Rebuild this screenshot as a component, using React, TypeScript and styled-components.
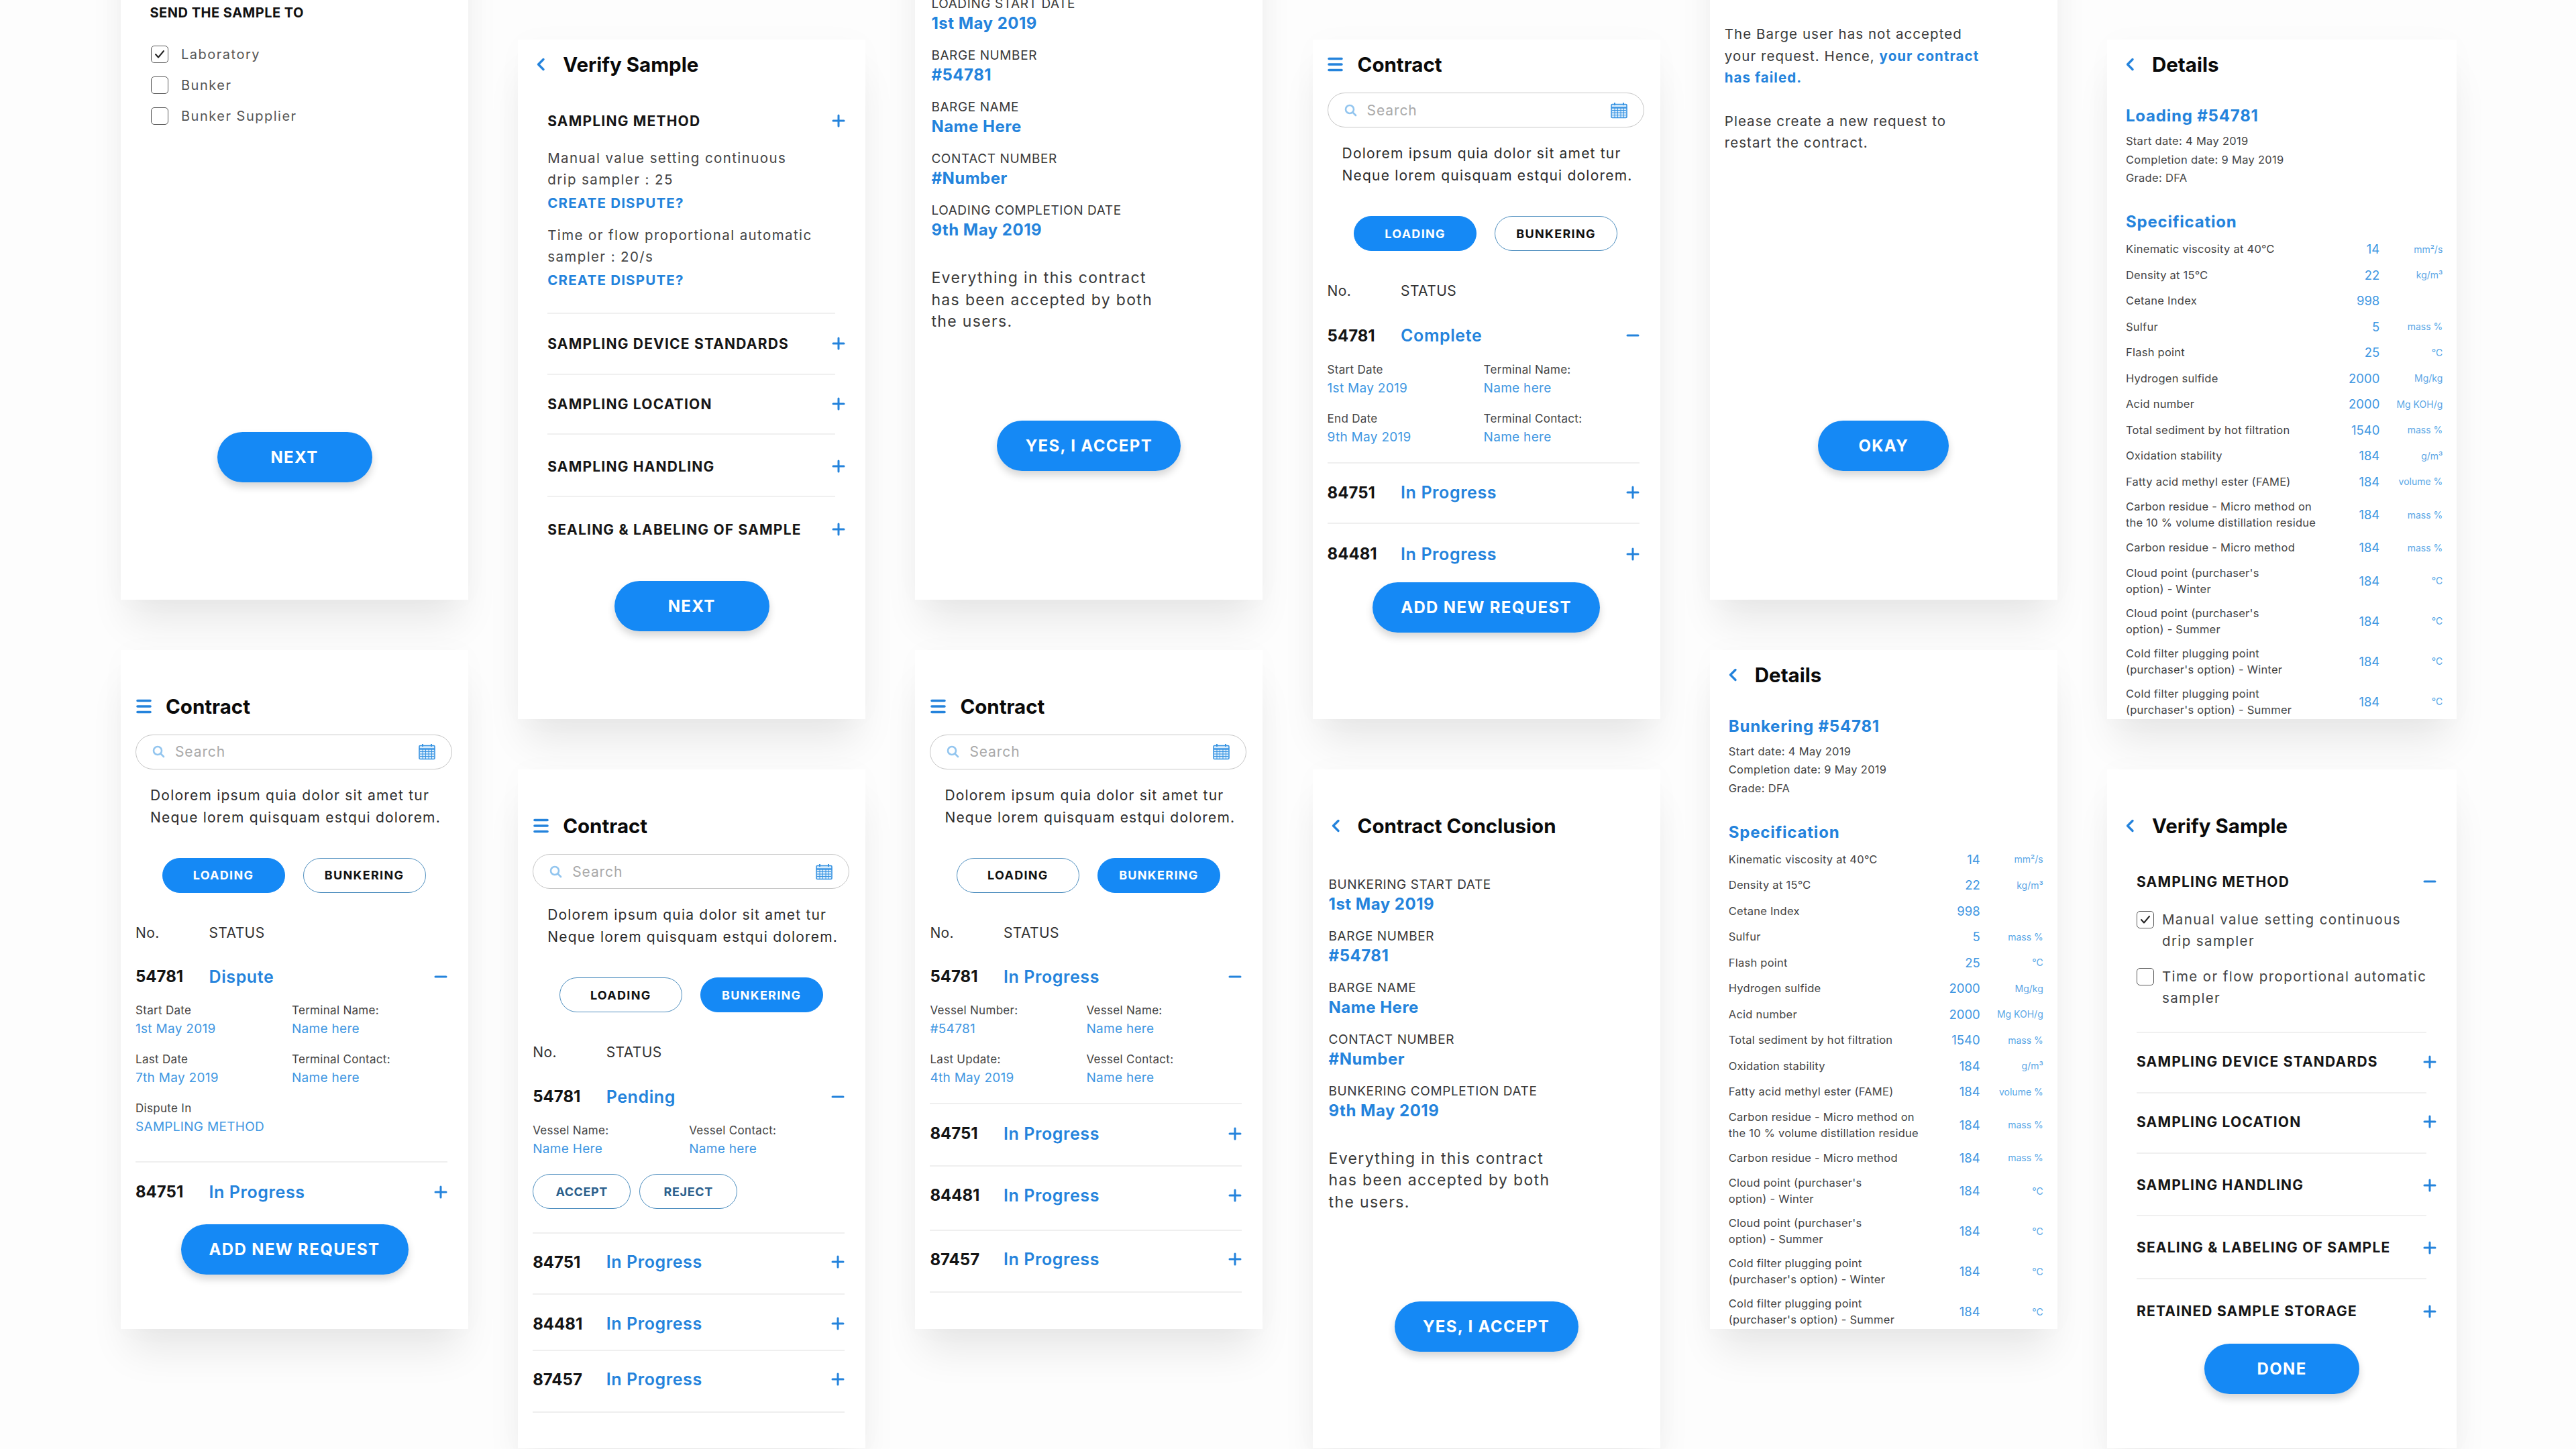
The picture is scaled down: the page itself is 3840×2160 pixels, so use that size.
import React from 'react'
import styled, { createGlobalStyle } from 'styled-components'

const BLUE = '#1589f5'
const LINK = '#2483dc'

const GlobalStyle = createGlobalStyle`
  html, body {
    margin: 0;
    background: #fdfdfd;
    font-family: Inter, "Liberation Sans", sans-serif;
  }
  #root {
    width: 3840px;
    height: 2160px;
    overflow: hidden;
  }
`

const Page = styled.div`
  display: flex;
  gap: 74.2px;
  padding-left: 180px;
  height: 2160px;
  overflow: hidden;
`

const Column = styled.div<{ $top: number }>`
  flex: 0 0 518px;
  display: flex;
  flex-direction: column;
  gap: 75px;
  margin-top: ${({ $top }) => $top}px;
`

const Card = styled.section`
  flex: 0 0 1012.5px;
  height: 1012.5px;
  display: flex;
  flex-direction: column;
  background: #fff;
  overflow: hidden;
  box-shadow: 0 44px 56px -12px rgba(0, 0, 0, 0.085), 0 0 44px rgba(0, 0, 0, 0.018);
`

const Header = styled.header<{ $top: number }>`
  flex: none;
  display: flex;
  align-items: center;
  gap: 21px;
  height: 40px;
  padding: ${({ $top }) => $top}px 0 0 22px;
`

const IconSlot = styled.span`
  width: 24px;
  display: flex;
  justify-content: center;
`

const Title = styled.h1`
  margin: 0;
  font-size: 29.5px;
  font-weight: 700;
  color: #0a0a0a;
`

const SearchBox = styled.div`
  display: flex;
  align-items: center;
  height: 52px;
  margin: 22px -7px 0 0;
  padding: 0 24px;
  border: 1.5px solid #c6c6c6;
  border-radius: 26px;
  box-sizing: border-box;
`

const SearchText = styled.span`
  flex: 1;
  margin-left: 15px;
  font-size: 21px;
  letter-spacing: 0.9px;
  color: #a9a9a9;
`

const Intro = styled.p`
  margin: 22px 0 0 22px;
  font-size: 21px;
  line-height: 33px;
  letter-spacing: 1.2px;
  white-space: nowrap;
  color: #2b2b2b;
`

const Tabs = styled.div`
  display: flex;
  justify-content: center;
  gap: 27px;
  margin: 44px -7px 0 0;
`

const Tab = styled.button<{ $active?: boolean }>`
  width: 183px;
  height: 52px;
  padding: 0;
  border-radius: 26px;
  border: 1.5px solid ${({ $active }) => ($active ? BLUE : '#4f8fbf')};
  background: ${({ $active }) => ($active ? BLUE : '#fff')};
  color: ${({ $active }) => ($active ? '#fff' : '#111')};
  font-family: inherit;
  font-size: 18px;
  font-weight: 700;
  letter-spacing: 1.3px;
`

const ColumnHead = styled.div`
  display: flex;
  margin-top: 45px;
  font-size: 21px;
  line-height: 30px;
  letter-spacing: 0.4px;
  color: #333;
`

const NoCell = styled.span`
  flex: 0 0 109.5px;
`

const ContractBody = styled.div`
  padding: 0 31px 0 22px;
`

const RowItem = styled.div<{ $t: number; $b: number; $line?: boolean }>`
  padding: ${({ $t }) => $t}px 0 ${({ $b }) => $b}px;
  border-bottom: ${({ $line }) => ($line ? '2px solid #efefef' : 'none')};
  margin-bottom: ${({ $line }) => ($line ? '-2px' : '0')};
`

const RowHead = styled.div`
  display: flex;
  align-items: center;
  height: 40px;
`

const RowNo = styled.span`
  flex: 0 0 109.5px;
  font-size: 24px;
  font-weight: 700;
  color: #141414;
`

const RowStatus = styled.span`
  flex: 1;
  font-size: 25px;
  font-weight: 600;
  letter-spacing: 0.6px;
  color: ${LINK};
`

const DetailGrid = styled.div`
  display: grid;
  grid-template-columns: 233px 1fr;
  row-gap: 19px;
  margin-top: 17.5px;
`

const DetailItem = styled.div`
  display: flex;
  flex-direction: column;
`

const DetailLabel = styled.span`
  font-size: 17px;
  line-height: 27px;
  letter-spacing: 0.3px;
  color: #444;
`

const DetailValue = styled.span`
  font-size: 19px;
  line-height: 27px;
  letter-spacing: 0.3px;
  color: #3f97e2;
`

const RowActions = styled.div`
  display: flex;
  gap: 13px;
  margin-top: 24px;
`

const OutlineButton = styled.button`
  width: 146px;
  height: 52px;
  padding: 0;
  border-radius: 26px;
  border: 1.5px solid #4f8fbf;
  background: #fff;
  color: #2b5f8c;
  font-family: inherit;
  font-size: 18px;
  font-weight: 700;
  letter-spacing: 0.6px;
`

const MainButton = styled.button<{ $w: number; $mt: number }>`
  align-self: center;
  flex: none;
  width: ${({ $w }) => $w}px;
  height: 75px;
  margin-top: ${({ $mt }) => $mt}px;
  padding: 0;
  border: none;
  border-radius: 38px;
  background: ${BLUE};
  color: #fff;
  font-family: inherit;
  font-size: 24px;
  font-weight: 700;
  letter-spacing: 1.35px;
  box-shadow: 0 7px 12px rgba(0, 0, 0, 0.16);
`

const Accordion = styled.div<{ $mt?: number }>`
  margin: ${({ $mt }) => $mt ?? 0}px 45px 0 44px;
`

const AccSection = styled.div<{ $t: number; $b: number; $line?: boolean }>`
  padding: ${({ $t }) => $t}px 0 ${({ $b }) => $b}px;
  border-bottom: ${({ $line }) => ($line ? '2px solid #f0f0f0' : 'none')};
  margin-bottom: ${({ $line }) => ($line ? '-2px' : '0')};
`

const AccHead = styled.div`
  display: flex;
  align-items: center;
  justify-content: space-between;
  height: 40px;
  margin-right: -15px;
`

const AccTitle = styled.h2`
  margin: 0;
  font-size: 21px;
  font-weight: 700;
  letter-spacing: 1.2px;
  white-space: nowrap;
  color: #161616;
`

const AccText = styled.p<{ $mt: number }>`
  margin: ${({ $mt }) => $mt}px 0 0;
  font-size: 20.5px;
  line-height: 32px;
  letter-spacing: 1.4px;
  white-space: pre;
  color: #444;
`

const DisputeLink = styled.a`
  display: block;
  margin-top: 2px;
  font-size: 20.5px;
  font-weight: 700;
  line-height: 34px;
  letter-spacing: 1.2px;
  color: ${LINK};
`

const SendTitle = styled.h2`
  margin: 124px 0 0 43.5px;
  font-size: 20px;
  line-height: 28px;
  font-weight: 700;
  letter-spacing: 0.5px;
  color: #111;
`

const CheckList = styled.div`
  display: flex;
  flex-direction: column;
  gap: 20px;
  margin: 35px 0 0 45px;
`

const CheckRow = styled.label`
  display: flex;
  align-items: center;
  gap: 19px;
  font-size: 20px;
  letter-spacing: 1.5px;
  color: #555;
`

const CheckBox = styled.span<{ $top?: number }>`
  flex: none;
  display: flex;
  align-items: center;
  justify-content: center;
  width: 26px;
  height: 26px;
  margin-top: ${({ $top }) => $top ?? 0}px;
  border: 1.5px solid #555;
  border-radius: 5px;
  box-sizing: border-box;
`

const SampleOption = styled.div<{ $mt: number }>`
  display: flex;
  gap: 12px;
  margin-top: ${({ $mt }) => $mt}px;
`

const Facts = styled.div<{ $mt: number }>`
  display: flex;
  flex-direction: column;
  gap: 19px;
  margin: ${({ $mt }) => $mt}px 0 0 24px;
`

const Fact = styled.div`
  display: flex;
  flex-direction: column;
`

const FactLabel = styled.span`
  font-size: 19px;
  line-height: 29px;
  letter-spacing: 0.6px;
  white-space: nowrap;
  color: #383838;
`

const FactValue = styled.span`
  font-size: 24px;
  font-weight: 700;
  line-height: 29px;
  letter-spacing: 0.5px;
  color: ${LINK};
`

const Paragraph = styled.p<{ $mt: number; $size: number; $ls: number; $left: number }>`
  margin: ${({ $mt }) => $mt}px 0 0 ${({ $left }) => $left}px;
  font-size: ${({ $size }) => $size}px;
  line-height: 32.5px;
  letter-spacing: ${({ $ls }) => $ls}px;
  white-space: pre;
  color: #3a3a3a;
`

const Strong = styled.b`
  font-weight: 700;
  color: ${LINK};
`

const DetailHeading = styled.h2<{ $mt: number }>`
  margin: ${({ $mt }) => $mt}px 0 0 28px;
  font-size: 24px;
  line-height: 36px;
  font-weight: 700;
  letter-spacing: 0.8px;
  color: ${LINK};
`

const MetaList = styled.div`
  margin: 6px 0 0 28px;
  font-size: 16.5px;
  line-height: 27.5px;
  letter-spacing: 0.3px;
  color: #444;
`

const SpecTable = styled.div`
  margin: 3px 21px 0 28px;
`

const SpecRow = styled.div<{ $double: boolean }>`
  display: grid;
  grid-template-columns: 1fr 62px 94px;
  align-items: center;
  height: ${({ $double }) => ($double ? 60 : 38.5)}px;
`

const SpecLabel = styled.span`
  font-size: 16.5px;
  line-height: 24px;
  letter-spacing: 0.25px;
  white-space: pre;
  color: #444;
`

const SpecValue = styled.span`
  font-size: 18.5px;
  text-align: right;
  color: #3f97e2;
`

const SpecUnit = styled.span`
  font-size: 14px;
  text-align: right;
  color: #5aa6e6;
`

const MenuIcon = () => (
  <svg width="23" height="22" viewBox="0 0 23 22" fill="none" stroke={LINK} strokeWidth="3.6" strokeLinecap="round">
    <path d="M2 2.5h19M2 11h19M2 19.5h19" />
  </svg>
)

const BackIcon = () => (
  <svg width="14" height="20" viewBox="0 0 14 20" fill="none" stroke={LINK} strokeWidth="3.4" strokeLinecap="round" strokeLinejoin="round">
    <path d="M11 2.5 3.5 10l7.5 7.5" />
  </svg>
)

const PlusIcon = () => (
  <svg width="20" height="20" viewBox="0 0 20 20" stroke={LINK} strokeWidth="3" strokeLinecap="round">
    <path d="M2 10h16M10 2v16" />
  </svg>
)

const MinusIcon = () => (
  <svg width="20" height="20" viewBox="0 0 20 20" stroke={LINK} strokeWidth="3" strokeLinecap="round">
    <path d="M2 10h16" />
  </svg>
)

const SearchIcon = () => (
  <svg width="19" height="19" viewBox="0 0 19 19" fill="none" stroke="#92c5ef" strokeWidth="2.6" strokeLinecap="round">
    <circle cx="8" cy="8" r="6" />
    <path d="m12.5 12.5 4.5 4.5" />
  </svg>
)

const CalendarIcon = () => (
  <svg width="25" height="25" viewBox="0 0 25 25" fill="none" stroke="#3793e2">
    <rect x="1" y="3.5" width="23" height="20" rx="1.5" fill="#d9ecfb" strokeWidth="1.6" />
    <path d="M1 8.5h23" strokeWidth="2.4" />
    <path d="M6 1v4M19 1v4" strokeWidth="2" />
    <path d="M2 12.5h21M2 16h21M2 19.5h21M6 9v14M10.5 9v14M15 9v14M19.5 9v14" strokeWidth="1" />
  </svg>
)

const CheckMark = () => (
  <svg width="16" height="14" viewBox="0 0 16 14" fill="none" stroke="#222" strokeWidth="2" strokeLinecap="round" strokeLinejoin="round">
    <path d="m2 7 4 4.5L14 2" />
  </svg>
)

type Detail = [string, string]

interface RowData {
  no: string
  status: string
  t: number
  b: number
  line?: boolean
  details?: Detail[]
  actions?: boolean
}

const ContractTop: React.FC<{ top: number; active: 'loading' | 'bunkering' }> = ({ top, active }) => (
  <>
    <Header $top={top}>
      <IconSlot>
        <MenuIcon />
      </IconSlot>
      <Title>Contract</Title>
    </Header>
    <ContractBody>
      <SearchBox>
        <SearchIcon />
        <SearchText>Search</SearchText>
        <CalendarIcon />
      </SearchBox>
      <Intro>
        Dolorem ipsum quia dolor sit amet tur
        <br />
        Neque lorem quisquam estqui dolorem.
      </Intro>
      <Tabs>
        <Tab $active={active === 'loading'}>LOADING</Tab>
        <Tab $active={active === 'bunkering'}>BUNKERING</Tab>
      </Tabs>
      <ColumnHead>
        <NoCell>No.</NoCell>
        <span>STATUS</span>
      </ColumnHead>
    </ContractBody>
  </>
)

const ContractRows: React.FC<{ rows: RowData[] }> = ({ rows }) => (
  <ContractBody>
    {rows.map((row) => (
      <RowItem key={row.no} $t={row.t} $b={row.b} $line={row.line}>
        <RowHead>
          <RowNo>{row.no}</RowNo>
          <RowStatus>{row.status}</RowStatus>
          {row.details ? <MinusIcon /> : <PlusIcon />}
        </RowHead>
        {row.details && (
          <DetailGrid>
            {row.details.map(([label, value]) => (
              <DetailItem key={label}>
                <DetailLabel>{label}</DetailLabel>
                <DetailValue>{value}</DetailValue>
              </DetailItem>
            ))}
          </DetailGrid>
        )}
        {row.actions && (
          <RowActions>
            <OutlineButton>ACCEPT</OutlineButton>
            <OutlineButton>REJECT</OutlineButton>
          </RowActions>
        )}
      </RowItem>
    ))}
  </ContractBody>
)

const BackHeader: React.FC<{ top: number; title: string }> = ({ top, title }) => (
  <Header $top={top}>
    <IconSlot>
      <BackIcon />
    </IconSlot>
    <Title>{title}</Title>
  </Header>
)

const ConclusionFacts: React.FC<{ kind: string; mt: number }> = ({ kind, mt }) => {
  const facts: Detail[] = [
    [`${kind} START DATE`, '1st May 2019'],
    ['BARGE NUMBER', '#54781'],
    ['BARGE NAME', 'Name Here'],
    ['CONTACT NUMBER', '#Number'],
    [`${kind} COMPLETION DATE`, '9th May 2019'],
  ]
  return (
    <Facts $mt={mt}>
      {facts.map(([label, value]) => (
        <Fact key={label}>
          <FactLabel>{label}</FactLabel>
          <FactValue>{value}</FactValue>
        </Fact>
      ))}
    </Facts>
  )
}

const specs: [string, string, string][] = [
  ['Kinematic viscosity at 40℃', '14', 'mm²/s'],
  ['Density at 15℃', '22', 'kg/m³'],
  ['Cetane Index', '998', ''],
  ['Sulfur', '5', 'mass %'],
  ['Flash point', '25', '℃'],
  ['Hydrogen sulfide', '2000', 'Mg/kg'],
  ['Acid number', '2000', 'Mg KOH/g'],
  ['Total sediment by hot filtration', '1540', 'mass %'],
  ['Oxidation stability', '184', 'g/m³'],
  ['Fatty acid methyl ester (FAME)', '184', 'volume %'],
  ['Carbon residue - Micro method on\nthe 10 % volume distillation residue', '184', 'mass %'],
  ['Carbon residue - Micro method', '184', 'mass %'],
  ["Cloud point (purchaser's\noption) - Winter", '184', '℃'],
  ["Cloud point (purchaser's\noption) - Summer", '184', '℃'],
  ["Cold filter plugging point\n(purchaser's option) - Winter", '184', '℃'],
  ["Cold filter plugging point\n(purchaser's option) - Summer", '184', '℃'],
]

const DetailsCard: React.FC<{ heading: string }> = ({ heading }) => (
  <Card>
    <BackHeader top={17} title="Details" />
    <DetailHeading $mt={39}>{heading}</DetailHeading>
    <MetaList>
      Start date: 4 May 2019
      <br />
      Completion date: 9 May 2019
      <br />
      Grade: DFA
    </MetaList>
    <DetailHeading $mt={33.5}>Specification</DetailHeading>
    <SpecTable>
      {specs.map(([label, value, unit]) => (
        <SpecRow key={label} $double={label.includes('\n')}>
          <SpecLabel>{label}</SpecLabel>
          <SpecValue>{value}</SpecValue>
          <SpecUnit>{unit}</SpecUnit>
        </SpecRow>
      ))}
    </SpecTable>
  </Card>
)

const App = () => (
  <>
    <GlobalStyle />
    <Page>
      <Column $top={-119}>
        <Card>
          <SendTitle>SEND THE SAMPLE TO</SendTitle>
          <CheckList>
            <CheckRow>
              <CheckBox>
                <CheckMark />
              </CheckBox>
              Laboratory
            </CheckRow>
            <CheckRow>
              <CheckBox />
              Bunker
            </CheckRow>
            <CheckRow>
              <CheckBox />
              Bunker Supplier
            </CheckRow>
          </CheckList>
          <MainButton $w={231} $mt={458}>NEXT</MainButton>
        </Card>
        <Card>
          <ContractTop top={64} active="loading" />
          <ContractRows
            rows={[
              {
                no: '54781',
                status: 'Dispute',
                t: 30,
                b: 37.5,
                line: true,
                details: [
                  ['Start Date', '1st May 2019'],
                  ['Terminal Name:', 'Name here'],
                  ['Last Date', '7th May 2019'],
                  ['Terminal Contact:', 'Name here'],
                  ['Dispute In', 'SAMPLING METHOD'],
                ],
              },
              { no: '84751', status: 'In Progress', t: 26, b: 0 },
            ]}
          />
          <MainButton $w={339} $mt={28}>ADD NEW REQUEST</MainButton>
        </Card>
      </Column>

      <Column $top={59}>
        <Card>
          <BackHeader top={17} title="Verify Sample" />
          <Accordion $mt={44}>
            <AccSection $t={0} $b={30.5} $line>
              <AccHead>
                <AccTitle>SAMPLING METHOD</AccTitle>
                <PlusIcon />
              </AccHead>
              <AccText $mt={20}>{'Manual value setting continuous\ndrip sampler : 25'}</AccText>
              <DisputeLink>CREATE DISPUTE?</DisputeLink>
              <AccText $mt={15}>{'Time or flow proportional automatic\nsampler : 20/s'}</AccText>
              <DisputeLink>CREATE DISPUTE?</DisputeLink>
            </AccSection>
            <AccSection $t={26.5} $b={25} $line>
              <AccHead>
                <AccTitle>SAMPLING DEVICE STANDARDS</AccTitle>
                <PlusIcon />
              </AccHead>
            </AccSection>
            <AccSection $t={25} $b={24} $line>
              <AccHead>
                <AccTitle>SAMPLING LOCATION</AccTitle>
                <PlusIcon />
              </AccHead>
            </AccSection>
            <AccSection $t={29} $b={24} $line>
              <AccHead>
                <AccTitle>SAMPLING HANDLING</AccTitle>
                <PlusIcon />
              </AccHead>
            </AccSection>
            <AccSection $t={30} $b={0}>
              <AccHead>
                <AccTitle>SEALING &amp; LABELING OF SAMPLE</AccTitle>
                <PlusIcon />
              </AccHead>
            </AccSection>
          </Accordion>
          <MainButton $w={231} $mt={57}>NEXT</MainButton>
        </Card>
        <Card>
          <ContractTop top={64.5} active="bunkering" />
          <ContractRows
            rows={[
              {
                no: '54781',
                status: 'Pending',
                t: 30.5,
                b: 34.5,
                line: true,
                actions: true,
                details: [
                  ['Vessel Name:', 'Name Here'],
                  ['Vessel Contact:', 'Name here'],
                ],
              },
              { no: '84751', status: 'In Progress', t: 24.5, b: 27, line: true },
              { no: '84481', status: 'In Progress', t: 25, b: 19, line: true },
              { no: '87457', status: 'In Progress', t: 24, b: 28, line: true },
            ]}
          />
        </Card>
      </Column>

      <Column $top={-119}>
        <Card>
          <BackHeader top={17} title="Contract Conclusion" />
          <ConclusionFacts kind="LOADING" mt={53} />
          <Paragraph $mt={41} $size={23} $ls={1.35} $left={24}>
            {'Everything in this contract\nhas been accepted by both\nthe users.'}
          </Paragraph>
          <MainButton $w={274} $mt={131}>YES, I ACCEPT</MainButton>
        </Card>
        <Card>
          <ContractTop top={64} active="bunkering" />
          <ContractRows
            rows={[
              {
                no: '54781',
                status: 'In Progress',
                t: 30,
                b: 23.5,
                line: true,
                details: [
                  ['Vessel Number:', '#54781'],
                  ['Vessel Name:', 'Name here'],
                  ['Last Update:', '4th May 2019'],
                  ['Vessel Contact:', 'Name here'],
                ],
              },
              { no: '84751', status: 'In Progress', t: 26, b: 27, line: true },
              { no: '84481', status: 'In Progress', t: 25, b: 31.5, line: true },
              { no: '87457', status: 'In Progress', t: 24, b: 27.5, line: true },
            ]}
          />
        </Card>
      </Column>

      <Column $top={59}>
        <Card>
          <ContractTop top={17} active="loading" />
          <ContractRows
            rows={[
              {
                no: '54781',
                status: 'Complete',
                t: 31,
                b: 24.5,
                line: true,
                details: [
                  ['Start Date', '1st May 2019'],
                  ['Terminal Name:', 'Name here'],
                  ['End Date', '9th May 2019'],
                  ['Terminal Contact:', 'Name here'],
                ],
              },
              { no: '84751', status: 'In Progress', t: 25, b: 25, line: true },
              { no: '84481', status: 'In Progress', t: 26.5, b: 0 },
            ]}
          />
          <MainButton $w={339} $mt={22}>ADD NEW REQUEST</MainButton>
        </Card>
        <Card>
          <BackHeader top={64.5} title="Contract Conclusion" />
          <ConclusionFacts kind="BUNKERING" mt={52.5} />
          <Paragraph $mt={41} $size={23} $ls={1.35} $left={24}>
            {'Everything in this contract\nhas been accepted by both\nthe users.'}
          </Paragraph>
          <MainButton $w={274} $mt={132}>YES, I ACCEPT</MainButton>
        </Card>
      </Column>

      <Column $top={-119}>
        <Card>
          <Paragraph $mt={154} $size={20.5} $ls={1.05} $left={22}>
            {'The Barge user has not accepted\nyour request. Hence, '}
            <Strong>{'your contract\nhas failed.'}</Strong>
          </Paragraph>
          <Paragraph $mt={32} $size={20.5} $ls={1.05} $left={22}>
            {'Please create a new request to\nrestart the contract.'}
          </Paragraph>
          <MainButton $w={195} $mt={397}>OKAY</MainButton>
        </Card>
        <DetailsCard heading="Bunkering #54781" />
      </Column>

      <Column $top={59}>
        <DetailsCard heading="Loading #54781" />
        <Card>
          <BackHeader top={64.5} title="Verify Sample" />
          <Accordion $mt={43}>
            <AccSection $t={0} $b={34} $line>
              <AccHead>
                <AccTitle>SAMPLING METHOD</AccTitle>
                <MinusIcon />
              </AccHead>
              <SampleOption $mt={20.5}>
                <CheckBox $top={3}>
                  <CheckMark />
                </CheckBox>
                <AccText $mt={0}>{'Manual value setting continuous\ndrip sampler'}</AccText>
              </SampleOption>
              <SampleOption $mt={21}>
                <CheckBox $top={3} />
                <AccText $mt={0}>{'Time or flow proportional automatic\nsampler'}</AccText>
              </SampleOption>
            </AccSection>
            <AccSection $t={25} $b={25.5} $line>
              <AccHead>
                <AccTitle>SAMPLING DEVICE STANDARDS</AccTitle>
                <PlusIcon />
              </AccHead>
            </AccSection>
            <AccSection $t={24} $b={25.5} $line>
              <AccHead>
                <AccTitle>SAMPLING LOCATION</AccTitle>
                <PlusIcon />
              </AccHead>
            </AccSection>
            <AccSection $t={29} $b={24} $line>
              <AccHead>
                <AccTitle>SAMPLING HANDLING</AccTitle>
                <PlusIcon />
              </AccHead>
            </AccSection>
            <AccSection $t={29} $b={25.5} $line>
              <AccHead>
                <AccTitle>SEALING &amp; LABELING OF SAMPLE</AccTitle>
                <PlusIcon />
              </AccHead>
            </AccSection>
            <AccSection $t={29.5} $b={0}>
              <AccHead>
                <AccTitle>RETAINED SAMPLE STORAGE</AccTitle>
                <PlusIcon />
              </AccHead>
            </AccSection>
          </Accordion>
          <MainButton $w={231} $mt={28}>DONE</MainButton>
        </Card>
      </Column>
    </Page>
  </>
)

export default App
